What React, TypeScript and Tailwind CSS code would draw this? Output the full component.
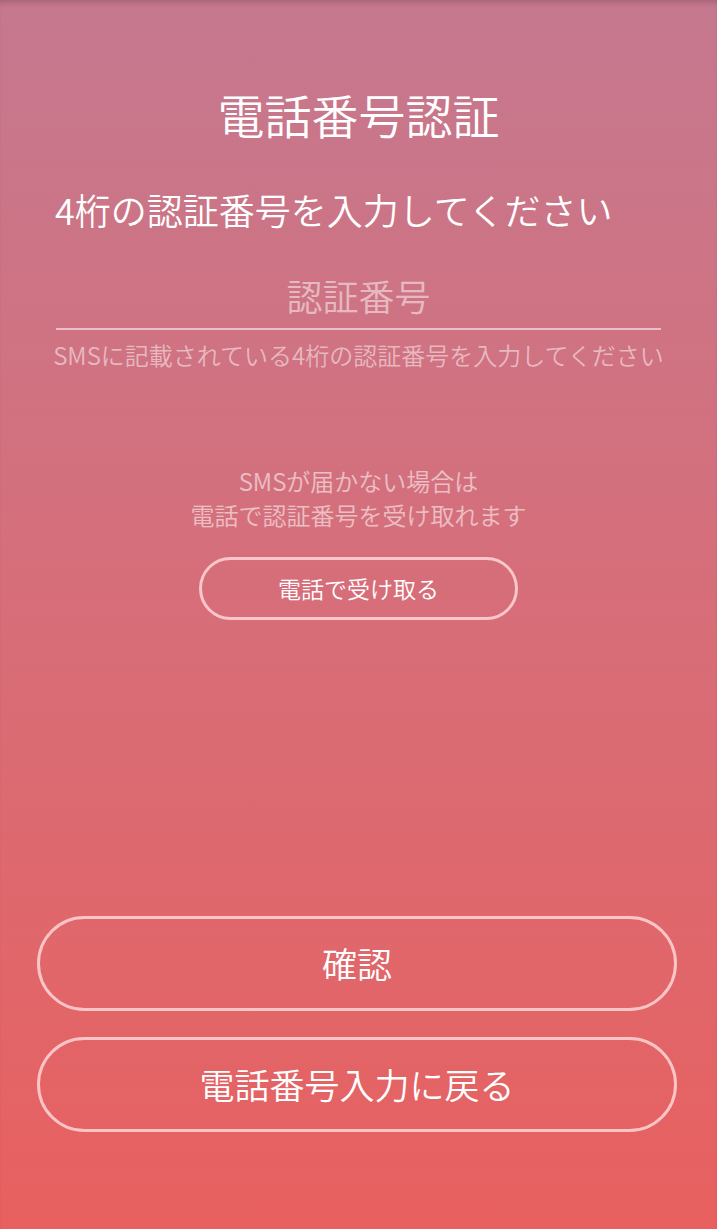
const App = () => {
  return (
    <div className="flex h-[1229px] w-full flex-col bg-gradient-to-b from-[#c5788f] to-[#e8605f] font-['Noto_Sans_CJK_JP','Noto_Sans',sans-serif] font-[350] text-white shadow-[inset_0_6px_6px_-4px_rgba(0,0,0,0.2)]">
      <h1 className="mt-[86px] text-center text-[47px] leading-[56px] font-[350]">
        電話番号認証
      </h1>
      <p className="mt-[44px] px-[55px] text-[36px] leading-[46px]">
        4桁の認証番号を入力してください
      </p>

      <div className="mx-[56px] mt-[41px] flex flex-col">
        <div className="text-center text-[36px] leading-[44px] text-white/50">
          認証番号
        </div>
        <div className="mt-[11px] h-[2px] bg-white/55" />
      </div>
      <p className="mt-[10px] text-center text-[24px] leading-[30px] whitespace-nowrap text-white/50">
        SMSに記載されている4桁の認証番号を入力してください
      </p>

      <div className="mt-[94px] flex flex-col items-center text-[24px] leading-[34px] text-white/55">
        <span>SMSが届かない場合は</span>
        <span>電話で認証番号を受け取れます</span>
      </div>
      <div className="mt-[25px] flex justify-center">
        <button className="h-[63px] w-[319px] rounded-full border-[3px] border-[#fac6ca] text-[23px] text-white">
          電話で受け取る
        </button>
      </div>

      <div className="flex-1" />

      <div className="flex flex-col gap-[26px] pr-[40px] pb-[97px] pl-[37px]">
        <button className="h-[95px] w-full rounded-full border-[3px] border-[#fbc4c6] text-[35px] text-white">
          確認
        </button>
        <button className="h-[95px] w-full rounded-full border-[3px] border-[#fbc4c6] text-[35px] text-white">
          電話番号入力に戻る
        </button>
      </div>
    </div>
  );
};

export default App;
